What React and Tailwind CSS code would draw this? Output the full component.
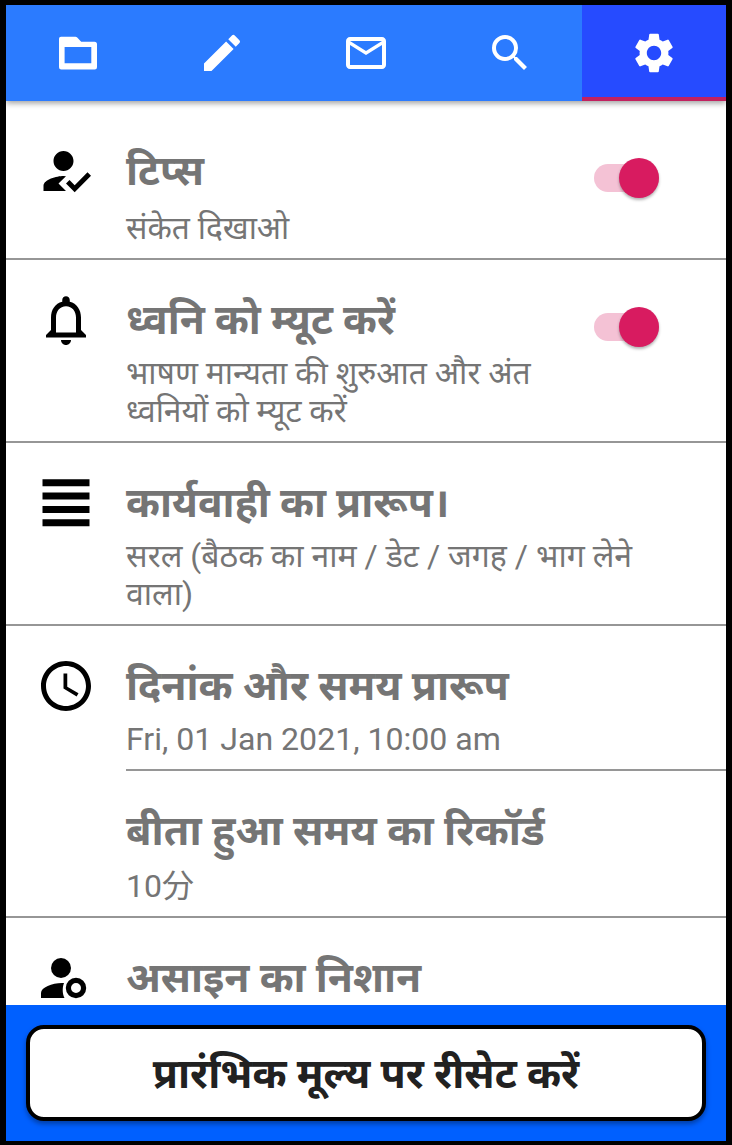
import {
  MdEdit,
  MdMailOutline,
  MdSearch,
  MdSettings,
  MdHowToReg,
  MdNotificationsNone,
  MdAccessTime,
} from "react-icons/md";

function FolderIcon() {
  return (
    <svg width="48" height="48" viewBox="0 0 48 48" fill="white">
      <path
        fillRule="evenodd"
        d="M7 7.700h14.500q1 0 1.700.7l4 4.300h13.300q2.500 0 2.500 2.500v23q0 2.300-2.300 2.300H7.300Q5 40.500 5 38.200V9.700Q5 7.700 7 7.700zM10.600 18v16.300h26.700v-16.300z"
      />
    </svg>
  );
}

function LinesIcon() {
  return (
    <svg width="60" height="60" viewBox="0 0 60 60" fill="black">
      <path d="M6.500 6.300h47v7h-47zM6.500 19.600h47v7h-47zM6.500 32.900h47v7h-47zM6.500 46.200h47v7h-47z" />
    </svg>
  );
}

function PersonRingIcon() {
  return (
    <svg width="60" height="60" viewBox="0 0 60 60" fill="black">
      <circle cx="25" cy="20" r="10" />
      <path d="M26 35C16 35 5 39.500 5 45v5h23.500C26.500 46 26 40 28 35z" />
      <circle cx="40" cy="40" r="7.600" fill="none" stroke="black" strokeWidth="5.200" />
    </svg>
  );
}

function Switch() {
  return (
    <div className="flex h-7 w-[65px] items-center justify-end rounded-full bg-[#f4c2d5]">
      <div className="size-10 shrink-0 rounded-full bg-[#d81b60] shadow-[0_2px_3px_rgba(0,0,0,0.3)]" />
    </div>
  );
}

function Row({ icon, title, lines, on, rowClass, iconClass, titleClass, textClass, switchClass }) {
  return (
    <section className={"flex shrink-0 border-[#969696] " + rowClass}>
      <div className={"ml-[30px] w-[60px] shrink-0 " + iconClass}>{icon}</div>
      <div className="ml-[30px] grow whitespace-nowrap text-[#757575]">
        <h2 className={"h-[54px] leading-[54px] font-bold " + titleClass}>{title}</h2>
        <div className={"leading-[38px] " + textClass}>
          {lines.map((line) => (
            <p key={line}>{line}</p>
          ))}
        </div>
      </div>
      {on && (
        <div className={"mr-[67px] " + switchClass}>
          <Switch />
        </div>
      )}
    </section>
  );
}

const tab = "flex grow basis-0 items-center justify-center";

export default function App() {
  return (
    <div className="flex h-[1145px] w-[732px] flex-col overflow-hidden bg-black px-[6px] pt-[5px] pb-1 font-[Roboto,'Noto_Sans','Noto_Sans_Devanagari','Noto_Sans_CJK_JP',sans-serif]">
      <nav className="z-10 flex h-24 shrink-0 bg-[#2b7bff] text-white shadow-[0_2px_6px_rgba(0,0,0,0.4)]">
        <div className={tab}><FolderIcon /></div>
        <div className={tab}><MdEdit size={48} /></div>
        <div className={tab}><MdMailOutline size={48} /></div>
        <div className={tab}><MdSearch size={48} /></div>
        <div className={tab + " border-b-4 border-[#c2215f] bg-[#264bff] pt-1"}><MdSettings size={48} /></div>
      </nav>
      <main className="flex min-h-0 grow flex-col overflow-hidden bg-white">
        <Row icon={<MdHowToReg size={60} />} title="टिप्स" lines={["संकेत दिखाओ"]} on
          rowClass="h-[159px] border-b-2" iconClass="pt-10" titleClass="mt-[43px] text-[41px]" textClass="mt-3 text-[31.700px]" switchClass="pt-[63px]" />
        <Row icon={<MdNotificationsNone size={60} />} title="ध्वनि को म्यूट करें" lines={["भाषण मान्यता की शुरुआत और अंत", "ध्वनियों को म्यूट करें"]} on
          rowClass="h-[183px] border-b-2" iconClass="pt-[30px]" titleClass="mt-[33px] text-[40.800px]" textClass="mt-[7px] text-[31.800px]" switchClass="pt-[53px]" />
        <Row icon={<LinesIcon />} title="कार्यवाही का प्रारूप।" lines={["सरल (बैठक का नाम / डेट / जगह / भाग लेने", "वाला)"]}
          rowClass="h-[183px] border-b-2" iconClass="pt-[30px]" titleClass="mt-[33px] text-[40.900px]" textClass="mt-[7px] text-[32px]" />
        <div className="shrink-0">
          <Row icon={<MdAccessTime size={60} />} title="दिनांक और समय प्रारूप" lines={["Fri, 01 Jan 2021, 10:00 am"]}
            rowClass="h-[143px]" iconClass="pt-[30px]" titleClass="mt-[33px] text-[41.100px]" textClass="mt-[7px] text-[32.100px]" />
          <div className="ml-[120px] h-[2px] bg-[#969696]" />
        </div>
        <Row title="बीता हुआ समय का रिकॉर्ड" lines={["10分"]}
          rowClass="h-[147px] border-b-2" iconClass="" titleClass="mt-[33px] text-[41.400px]" textClass="mt-[9px] text-[32px]" />
        <Row icon={<PersonRingIcon />} title="असाइन का निशान" lines={[]}
          rowClass="h-[87px]" iconClass="pt-[30px]" titleClass="mt-[33px] text-[40.900px]" textClass="" />
      </main>
      <footer className="h-[136px] shrink-0 bg-[#0060ff] px-5 pt-5">
        <button className="flex h-24 w-full items-center justify-center rounded-[18px] border-4 border-black bg-white pt-1 text-[41.100px] font-bold whitespace-nowrap text-[#212121] shadow-[0_3px_5px_rgba(0,0,0,0.35)]">
          <span>प्रारंभिक मूल्य पर रीसेट करें</span>
        </button>
      </footer>
    </div>
  );
}
